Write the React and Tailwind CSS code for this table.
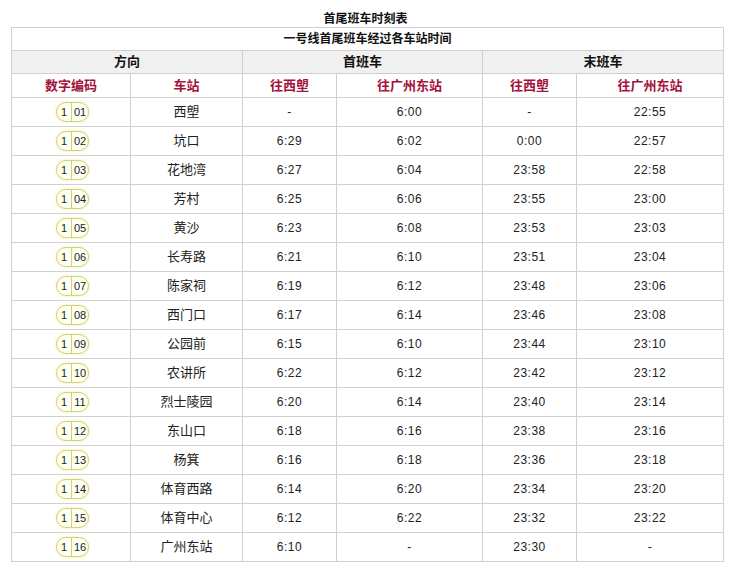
const rows = [
  ["01", "西塱", "-", "6:00", "-", "22:55"],
  ["02", "坑口", "6:29", "6:02", "0:00", "22:57"],
  ["03", "花地湾", "6:27", "6:04", "23:58", "22:58"],
  ["04", "芳村", "6:25", "6:06", "23:55", "23:00"],
  ["05", "黄沙", "6:23", "6:08", "23:53", "23:03"],
  ["06", "长寿路", "6:21", "6:10", "23:51", "23:04"],
  ["07", "陈家祠", "6:19", "6:12", "23:48", "23:06"],
  ["08", "西门口", "6:17", "6:14", "23:46", "23:08"],
  ["09", "公园前", "6:15", "6:10", "23:44", "23:10"],
  ["10", "农讲所", "6:22", "6:12", "23:42", "23:12"],
  ["11", "烈士陵园", "6:20", "6:14", "23:40", "23:14"],
  ["12", "东山口", "6:18", "6:16", "23:38", "23:16"],
  ["13", "杨箕", "6:16", "6:18", "23:36", "23:18"],
  ["14", "体育西路", "6:14", "6:20", "23:34", "23:20"],
  ["15", "体育中心", "6:12", "6:22", "23:32", "23:22"],
  ["16", "广州东站", "6:10", "-", "23:30", "-"],
];

function Badge({ code }) {
  return (
    <span className="inline-flex h-[20px] w-[33px] items-stretch rounded-full border border-[#d2d27e] bg-[#fffff2] text-[11px] leading-none text-[#222] shadow-[0_0_3px_#eeee99]">
      <span className="flex w-[15px] items-center justify-center border-r border-[#d2d27e]">1</span>
      <span className="flex flex-1 items-center justify-center">{code}</span>
    </span>
  );
}

export default function App() {
  const cell = "border border-[#d0d0d0] text-center";
  const red = "text-[#a3123a] font-bold text-[13px]";
  return (
    <div className="w-[731px] h-[570px] bg-white font-['Liberation_Sans','Noto_Sans_CJK_SC',sans-serif] text-[12px] text-[#222]">
      <div className="pt-[11px] text-center text-[12px] font-bold leading-[16px] text-[#111]">首尾班车时刻表</div>
      <table className="ml-[11px] w-[712px] table-fixed border-collapse">
        <colgroup>
          <col className="w-[119px]" />
          <col className="w-[112px]" />
          <col className="w-[94px]" />
          <col className="w-[146px]" />
          <col className="w-[94px]" />
          <col className="w-[147px]" />
        </colgroup>
        <tbody>
          <tr className="h-[23px]">
            <td colSpan={6} className={`${cell} font-bold text-[12px] text-[#111]`}>一号线首尾班车经过各车站时间</td>
          </tr>
          <tr className="h-[23px] bg-[#f0f0f0]">
            <td colSpan={2} className={`${cell} font-bold text-[13px] text-[#111]`}>方向</td>
            <td colSpan={2} className={`${cell} font-bold text-[13px] text-[#111]`}>首班车</td>
            <td colSpan={2} className={`${cell} font-bold text-[13px] text-[#111]`}>末班车</td>
          </tr>
          <tr className="h-[24px]">
            <td className={`${cell} ${red}`}>数字编码</td>
            <td className={`${cell} ${red}`}>车站</td>
            <td className={`${cell} ${red}`}>往西塱</td>
            <td className={`${cell} ${red}`}>往广州东站</td>
            <td className={`${cell} ${red}`}>往西塱</td>
            <td className={`${cell} ${red}`}>往广州东站</td>
          </tr>
          {rows.map((r) => (
            <tr key={r[0]} className="h-[29px]">
              <td className={`${cell} align-middle`}>
                <div className="flex justify-center pl-[3px]">
                  <Badge code={r[0]} />
                </div>
              </td>
              <td className={`${cell} text-[13px]`}>{r[1]}</td>
              <td className={`${cell} tracking-[0.5px]`}>{r[2]}</td>
              <td className={`${cell} tracking-[0.5px]`}>{r[3]}</td>
              <td className={`${cell} tracking-[0.5px]`}>{r[4]}</td>
              <td className={`${cell} tracking-[0.5px]`}>{r[5]}</td>
            </tr>
          ))}
        </tbody>
      </table>
    </div>
  );
}
